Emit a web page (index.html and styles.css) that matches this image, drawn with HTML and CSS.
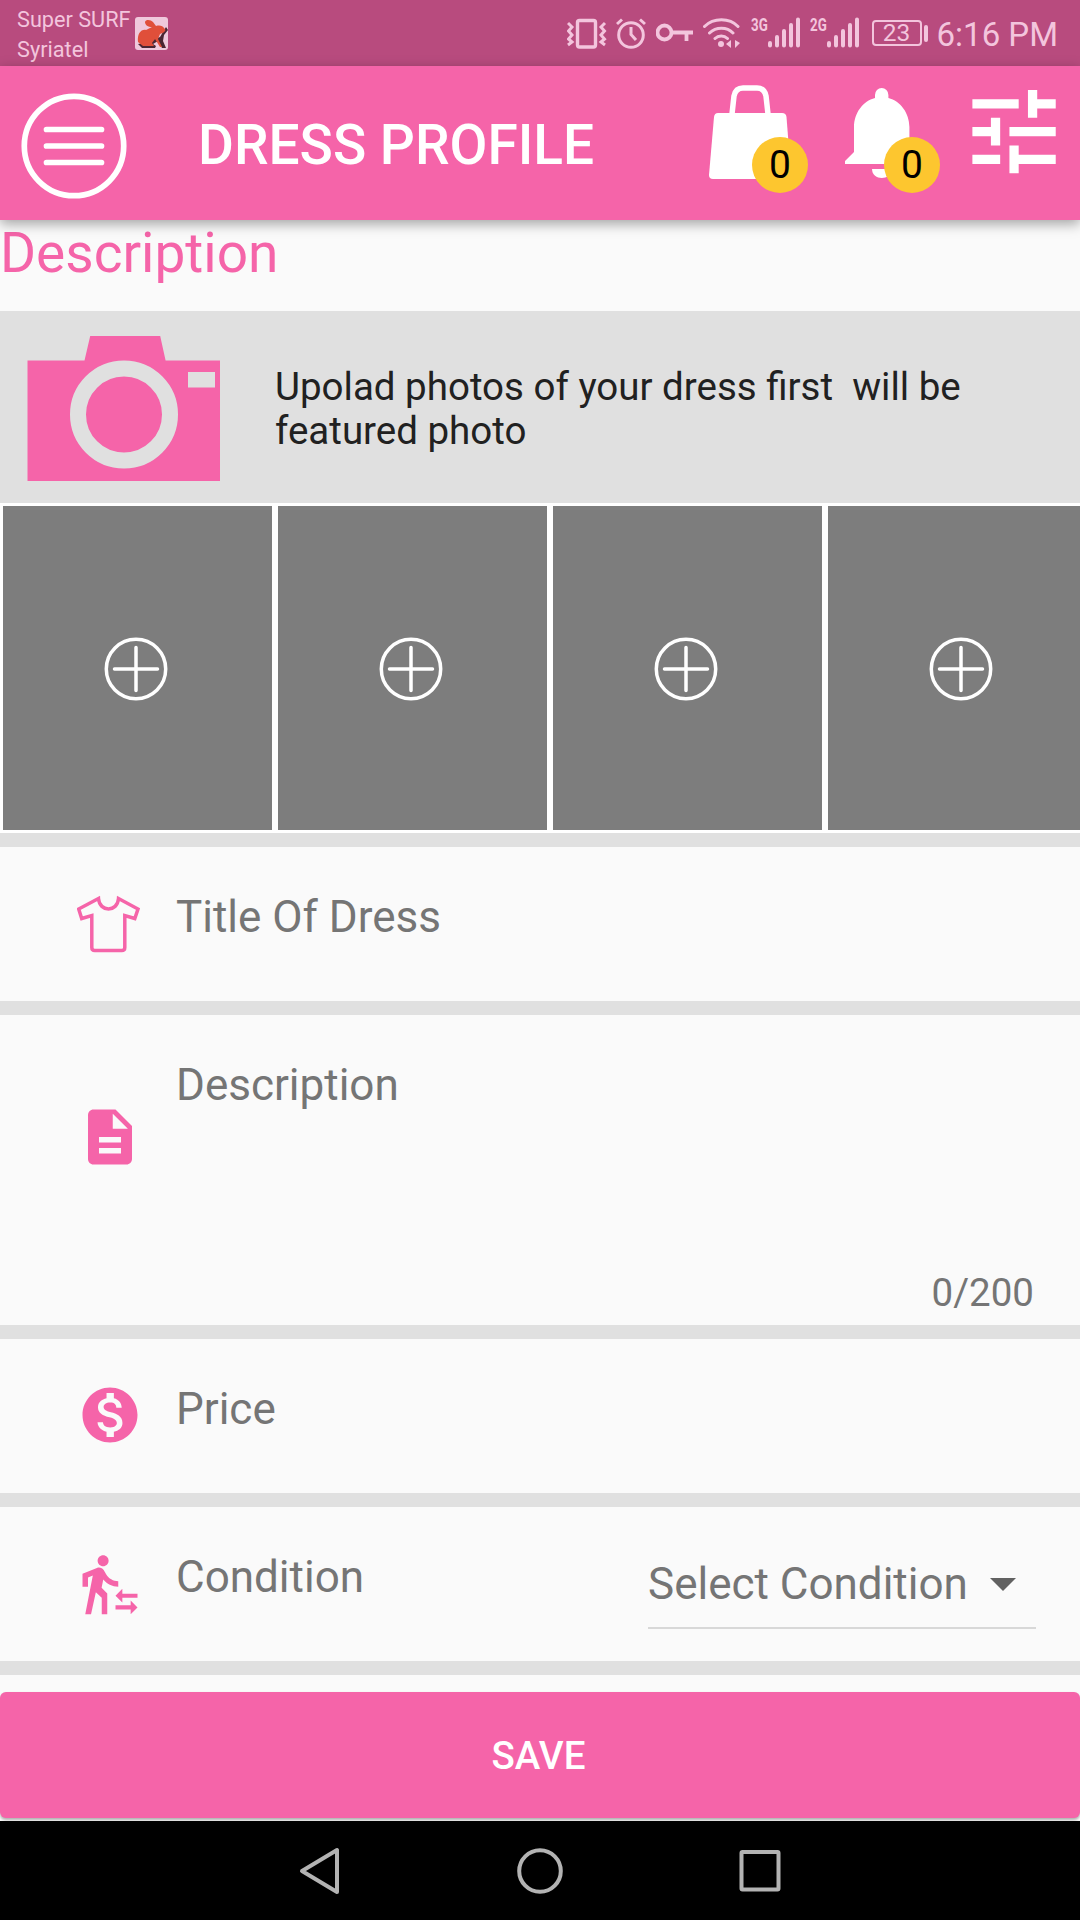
FILE: index.html
```html
<!DOCTYPE html>
<html lang="en">
<head>
    <meta charset="UTF-8">
    <meta name="viewport" content="width=device-width, initial-scale=1.0">
    <title>Dress Profile</title>
    <link rel="stylesheet" href="styles.css">
</head>
<body>
    <div class="status-bar">
        <div class="carrier">
            <span>Super SURF</span>
            <span>Syriatel</span>
        </div>
        <svg class="rabbit" viewBox="0 0 33 33">
            <rect width="33" height="33" rx="3" fill="#efc9dc"/>
            <path d="M3 27l4 4h13l1-2-3-2 5-3 4 7h4l-3-7 1-6 4-5-2-3-6 10-16 6z" fill="#4a2633"/>
            <path d="M10 5c1-3 6-2 8 0l3 4c4-1 7 0 8 2 1 1 2 2 1 3-1 2-4 2-5 3l-2 5 4 8h-2l-5-8-3 4 2 3H8l-5-4c-1-8 3-13 8-12l6-3c-4 0-7-2-7-5z" fill="#e04f3a"/>
        </svg>
        <div class="status-icons">
            <!-- vibrate -->
            <svg width="40" height="66" viewBox="567 0 40 66">
                <rect x="577.500" y="20.500" width="18" height="26.500" rx="2" fill="none" stroke="#f3c5dd" stroke-width="3.400"/>
                <path d="M568 23l4 4-3.500 4 3.500 4-3.500 4 3.500 3-4 3M605 23l-4 4 3.500 4-3.500 4 3.500 4-3.500 3 4 3" fill="none" stroke="#f3c5dd" stroke-width="3"/>
            </svg>
            <!-- alarm -->
            <svg width="30" height="66" viewBox="616.500 0 30 66">
                <path d="M631.500 27v7.500l5 5.500M617.500 24l5-4.500M645.500 24l-5-4.500" fill="none" stroke="#f3c5dd" stroke-width="3"/>
                <circle cx="631.500" cy="35" r="12.300" fill="none" stroke="#f3c5dd" stroke-width="3"/>
            </svg>
            <!-- vpn key -->
            <svg width="38" height="66" viewBox="657.500 0 38 66">
                <circle cx="666" cy="32.500" r="7" fill="none" stroke="#f3c5dd" stroke-width="3.800"/>
                <path d="M673 32.500h21.500M688 32.500v8.500" fill="none" stroke="#f3c5dd" stroke-width="3.800"/>
            </svg>
            <!-- wifi -->
            <svg width="38" height="66" viewBox="703 0 38 66">
                <path d="M704.500 26.500c9-9 25-9 33.500 0M709.500 33c6.500-6.500 17.500-6.500 23.500 0M715 38.500c3.500-3.500 9-3.500 12.500 0" fill="none" stroke="#f3c5dd" stroke-width="3" stroke-linecap="round"/>
                <circle cx="721" cy="44" r="3" fill="#f3c5dd"/>
                <path d="M731 40v8l-5-4zM735 40v8l5-5z" fill="#f3c5dd"/>
            </svg>
            <div class="signal">
                <span class="network">3G</span>
                <svg width="33" height="66" viewBox="0 0 33 66">
                    <path d="M2 43v2.500M9 37v8.500M16 31v14.500M23 25v20.500M30 19.500v26" stroke="#f3c5dd" stroke-width="4" stroke-linecap="round"/>
                </svg>
            </div>
            <div class="signal">
                <span class="network">2G</span>
                <svg width="33" height="66" viewBox="0 0 33 66">
                    <path d="M2 43v2.500M9 37v8.500M16 31v14.500M23 25v20.500M30 19.500v26" stroke="#f3c5dd" stroke-width="4" stroke-linecap="round"/>
                </svg>
            </div>
            <div class="battery">
                <span class="battery-level">23</span>
                <span class="battery-tip"></span>
            </div>
        </div>
        <span class="clock">6:16 PM</span>
    </div>

    <header class="toolbar">
        <svg class="menu-icon" viewBox="0 0 106 106">
            <g fill="none" stroke="#fff" stroke-width="5.700" stroke-linecap="round">
                <circle cx="53" cy="53" r="49.700"/>
                <path d="M25.500 36.500h55M25.500 53h55M25.500 69.500h55"/>
            </g>
        </svg>
        <h1 class="title">DRESS PROFILE</h1>
        <div class="actions">
            <div class="action">
                <svg width="84" height="96" viewBox="708 84 84 96">
                    <path d="M732 114l2-18c1-5 4-8 9-8h14c5 0 8 3 9 8l2 18" fill="none" stroke="#fff" stroke-width="5.500"/>
                    <path d="M718 113h64q4 0 4.500 4l4.500 58q0 4-4 4h-74q-4 0-4-4l5-58q.5-4 4-4z" fill="#fff"/>
                </svg>
                <span class="badge">0</span>
            </div>
            <div class="action">
                <svg width="76" height="96" viewBox="844 84 76 96">
                    <path d="M875 98v-3a6.700 7 0 0 1 13.400 0v3c12 3 21 15 21 29v25l9 9v3h-73.400v-3l9-9v-25c0-14 9-26 21-29z" fill="#fff"/>
                    <path d="M872 169h19.500c0 12-19.500 12-19.500 0z" fill="#fff"/>
                </svg>
                <span class="badge badge-bell">0</span>
            </div>
            <svg width="84" height="96" viewBox="972 84 84 96">
                <path transform="translate(958.500 76.100) scale(4.630)" d="M3 17v2h6v-2H3zM3 5v2h10V5H3zm10 16v-2h8v-2h-8v-2h-2v6h2zM7 9v2H3v2h4v2h2V9H7zm14 4v-2H11v2h10zm-6-4h2V7h4V5h-4V3h-2v6z" fill="#fff"/>
            </svg>
        </div>
    </header>

    <main class="content">
        <h2 class="section-title">Description</h2>

        <div class="upload">
            <svg width="194" height="146" viewBox="27 336 194 146">
                <path d="M27.500 360.500h57l5.700-24.500h70l5.400 24.500h54.400V481H27.500z" fill="#f564a9"/>
                <circle cx="124" cy="414.500" r="46" fill="none" stroke="#e0e0e0" stroke-width="16"/>
                <rect x="188" y="372" width="27" height="15.500" fill="#e0e0e0"/>
            </svg>
            <p class="upload-text">Upolad photos of your dress first&nbsp; will be<br>featured photo</p>
        </div>

        <div class="photos">
            <div class="photo">
                <svg class="plus" viewBox="0 0 64 64">
                    <path d="M10.500 32h43M32 10.500v43" stroke="#fff" stroke-width="3.500" stroke-linecap="round"/>
                    <circle cx="32" cy="32" r="29.700" fill="none" stroke="#fff" stroke-width="3.500"/>
                </svg>
            </div>
            <div class="photo">
                <svg class="plus" viewBox="0 0 64 64">
                    <path d="M10.500 32h43M32 10.500v43" stroke="#fff" stroke-width="3.500" stroke-linecap="round"/>
                    <circle cx="32" cy="32" r="29.700" fill="none" stroke="#fff" stroke-width="3.500"/>
                </svg>
            </div>
            <div class="photo">
                <svg class="plus" viewBox="0 0 64 64">
                    <path d="M10.500 32h43M32 10.500v43" stroke="#fff" stroke-width="3.500" stroke-linecap="round"/>
                    <circle cx="32" cy="32" r="29.700" fill="none" stroke="#fff" stroke-width="3.500"/>
                </svg>
            </div>
            <div class="photo">
                <svg class="plus" viewBox="0 0 64 64">
                    <path d="M10.500 32h43M32 10.500v43" stroke="#fff" stroke-width="3.500" stroke-linecap="round"/>
                    <circle cx="32" cy="32" r="29.700" fill="none" stroke="#fff" stroke-width="3.500"/>
                </svg>
            </div>
        </div>

        <div class="form">
            <div class="row">
                <svg class="row-icon" viewBox="77 890 66 66">
                    <path d="M98.500 898.500L78.700 909l3 9.500L91.800 915.500v32q0 3 3 3h27q3 0 3-3v-32l10 3 3.200-9.500L118.500 898.500c-1 14-19 14-20 0z" fill="none" stroke="#f564a9" stroke-width="3.500"/>
                </svg>
                <span class="label">Title Of Dress</span>
            </div>
            <div class="row row-description">
                <svg class="row-icon" viewBox="0 0 24 24">
                    <path d="M14 2H6c-1.100 0-1.990.9-1.990 2L4 20c0 1.100.89 2 1.990 2H18c1.100 0 2-.9 2-2V8l-6-6zm2 16H8v-2h8v2zm0-4H8v-2h8v2zm-3-5V3.500L18.500 9H13z" fill="#f564a9"/>
                </svg>
                <span class="label">Description</span>
                <span class="counter">0/200</span>
            </div>
            <div class="row">
                <svg class="row-icon" viewBox="0 0 24 24">
                    <path d="M12 2C6.480 2 2 6.480 2 12s4.480 10 10 10 10-4.480 10-10S17.520 2 12 2zm1.410 16.090V20h-2.670v-1.930c-1.710-.36-3.160-1.460-3.270-3.400h1.960c.1 1.050.82 1.870 2.650 1.870 1.960 0 2.400-.98 2.400-1.590 0-.83-.44-1.610-2.670-2.140-2.480-.6-4.180-1.620-4.180-3.670 0-1.720 1.390-2.840 3.110-3.210V4h2.670v1.950c1.860.45 2.790 1.860 2.850 3.390H14.300c-.05-1.110-.64-1.870-2.220-1.870-1.500 0-2.400.68-2.400 1.640 0 .84.65 1.390 2.670 1.910s4.180 1.390 4.180 3.910c-.01 1.830-1.380 2.830-3.120 3.160z" fill="#f564a9"/>
                </svg>
                <span class="label">Price</span>
            </div>
            <div class="row row-condition">
                <svg class="row-icon" viewBox="0 0 24 24">
                    <path d="M16.490 15.500v-1.750L14 16.250l2.490 2.500V17H22v-1.500zm3.020 4.250H14v1.500h5.510V23L22 20.500 19.510 18zM9.500 5.500c1.100 0 2-.9 2-2s-.9-2-2-2-2 .9-2 2 .9 2 2 2zM5.750 8.900L3 23h2.100l1.750-8L9 17v6h2v-7.550L8.950 13.400l.6-3C10.850 12 12.800 13 15 13v-2c-1.850 0-3.450-1-4.350-2.450l-.95-1.600C9.350 6.350 8.700 6 8 6c-.25 0-.5.050-.75.150L2 8.300V13h2V9.650l1.750-.75" fill="#f564a9"/>
                </svg>
                <span class="label">Condition</span>
                <div class="select">
                    <span>Select Condition</span>
                    <span class="arrow"></span>
                </div>
            </div>
        </div>

        <button class="save">SAVE</button>
    </main>

    <nav class="nav-bar">
        <svg width="44" height="48" viewBox="298 1847 44 48">
            <path d="M337 1850v42L302 1871z" fill="none" stroke="#b3b3b3" stroke-width="4" stroke-linejoin="round"/>
        </svg>
        <svg width="48" height="48" viewBox="0 0 48 48">
            <circle cx="24" cy="24" r="20.800" fill="none" stroke="#b3b3b3" stroke-width="4"/>
        </svg>
        <svg width="44" height="48" viewBox="0 0 44 48">
            <rect x="3.500" y="5" width="37" height="37.500" rx="1" fill="none" stroke="#b3b3b3" stroke-width="4"/>
        </svg>
    </nav>
</body>
</html>
```
FILE: styles.css
```css
* {
    box-sizing: border-box;
}
body {
    margin: 0;
    width: 1080px;
    height: 1920px;
    display: flex;
    flex-direction: column;
    overflow: hidden;
    font-family: Roboto, sans-serif;
    background-color: #fafafa;
}
svg {
    display: block;
    flex-shrink: 0;
}

/* status bar */
.status-bar {
    display: flex;
    height: 66px;
    padding: 0 22px 0 17px;
    background-color: #b84b7e;
    color: #f3c5dd;
}
.carrier {
    display: flex;
    flex-direction: column;
    width: 118px;
    padding-top: 5px;
    font-size: 21.7px;
    line-height: 30px;
    white-space: nowrap;
}
.rabbit {
    width: 33px;
    height: 33px;
    margin-top: 17px;
}
.status-icons {
    display: flex;
    gap: 9.5px;
    margin-left: auto;
}
.signal {
    display: flex;
    width: 50px;
}
.network {
    width: 17px;
    height: 66px;
    padding-top: 14px;
    font-size: 18.5px;
    line-height: 22px;
    font-weight: bold;
    transform: scaleX(0.72);
    transform-origin: left;
}
.battery {
    display: flex;
    align-items: center;
    gap: 2px;
    height: 66px;
    margin-left: 2px;
}
.battery-level {
    width: 50px;
    height: 26px;
    border: 2px solid #f3c5dd;
    border-radius: 4px;
    font-size: 24.5px;
    line-height: 22px;
    text-align: center;
}
.battery-tip {
    width: 4px;
    height: 17px;
    border-radius: 2px;
    background-color: #f3c5dd;
}
.clock {
    margin-left: 9px;
    font-size: 33px;
    line-height: 69px;
    white-space: nowrap;
}

/* toolbar */
.toolbar {
    position: relative;
    display: flex;
    align-items: center;
    height: 154px;
    padding: 4px 24px 0 21px;
    background-color: #f564a9;
    box-shadow: 0 4px 12px rgba(0,0,0,0.35);
}
.menu-icon {
    width: 106px;
    height: 106px;
    margin-top: 1px;
}
.title {
    margin: 0 0 0 71px;
    color: white;
    font-size: 55px;
    font-weight: 500;
}
.actions {
    display: flex;
    align-self: flex-start;
    gap: 52px;
    margin-top: 14px;
    margin-left: auto;
}
.action {
    position: relative;
}
.badge {
    position: absolute;
    left: 44px;
    top: 53px;
    width: 56px;
    height: 56px;
    border-radius: 50%;
    background-color: #fdc62f;
    color: black;
    font-size: 39px;
    line-height: 56px;
    text-align: center;
}
.badge-bell {
    left: 40px;
}

/* content */
.content {
    height: 1601px;
}
.section-title {
    height: 91px;
    margin: 0;
    color: #f564a9;
    font-size: 55px;
    font-weight: normal;
    line-height: 67px;
}
.upload {
    display: flex;
    align-items: center;
    gap: 54px;
    height: 192px;
    padding: 3px 0 0 27px;
    background-color: #e0e0e0;
}
.upload-text {
    margin: 0;
    color: #212121;
    font-size: 38.5px;
    line-height: 44px;
}
.photos {
    display: flex;
    height: 330px;
    overflow: hidden;
    background-color: white;
}
.photo {
    display: flex;
    align-items: center;
    justify-content: center;
    flex: 0 0 275px;
    padding: 1px 4px 0 0;
    border: 3px solid white;
    background-color: #7d7d7d;
}
.plus {
    width: 64px;
    height: 64px;
}
.row {
    display: flex;
    align-items: flex-start;
    height: 168px;
    padding: 43px 44px 0 77px;
    border-top: 14px solid #e0e0e0;
}
.form {
    border-bottom: 14px solid #e0e0e0;
}
.row-description {
    height: 324px;
}
.row-description .row-icon {
    margin-top: 46px;
}
.row-condition .row-icon {
    margin-top: 1px;
}
.row-icon {
    width: 66px;
    height: 66px;
}
.label {
    margin-left: 33px;
    color: #757575;
    font-size: 44px;
    line-height: 54px;
}
.counter {
    margin-left: auto;
    align-self: flex-end;
    margin: 0 2px 9px auto;
    color: #757575;
    font-size: 38.5px;
    line-height: 46px;
}
.select {
    display: flex;
    align-items: center;
    justify-content: space-between;
    width: 388px;
    height: 79px;
    margin-left: auto;
    padding: 0 20px 10px 0;
    border-bottom: 2px solid #d8d8d8;
    color: #757575;
    font-size: 44px;
    white-space: nowrap;
}
.arrow {
    margin-top: 2px;
    border: 13px solid transparent;
    border-top-color: #616161;
    border-bottom-width: 0;
}
.save {
    display: block;
    width: 100%;
    height: 126px;
    margin-top: 17px;
    padding: 1px 3px 0 0;
    border: none;
    border-radius: 6px;
    background-color: #f564a9;
    box-shadow: 0 2px 3px rgba(0,0,0,0.3);
    color: white;
    font-family: Roboto, sans-serif;
    font-size: 38.5px;
    font-weight: 500;
}

/* android buttons */
.nav-bar {
    position: relative;
    display: flex;
    align-items: center;
    justify-content: center;
    gap: 174px;
    height: 99px;
    background-color: black;
}
```
